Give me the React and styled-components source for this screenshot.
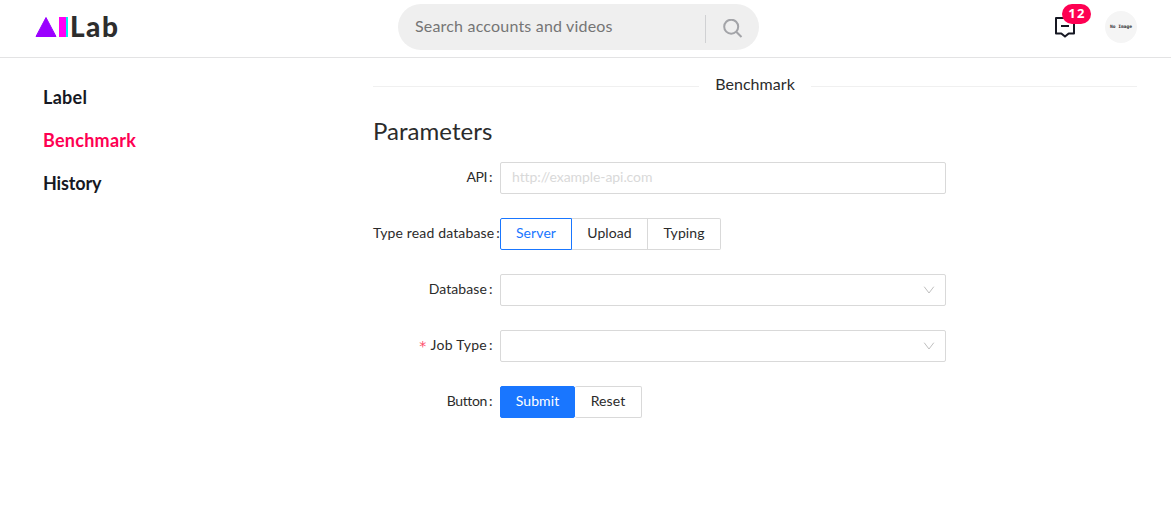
import React from 'react';
import styled, { createGlobalStyle } from 'styled-components';

const Global = createGlobalStyle`
  *, *::before, *::after { box-sizing: border-box; }
  body { margin: 0; background: #fff; color: #2b2b2b; font-family: Lato, Roboto, sans-serif; font-size: 14px; }
  button, input { font: inherit; letter-spacing: inherit; }
  h2 { margin: 0; }
`;

const Page = styled.div`
  height: 519px;
  overflow: hidden;
`;

const Header = styled.header`
  display: flex;
  align-items: flex-start;
  height: 58px;
  padding: 4px 34px 0 35px;
  border-bottom: 1px solid #e3e3e4;
`;

const Logo = styled.div`
  display: flex;
  align-items: center;
  width: 101px;
  height: 46px;
`;

const LogoMark = styled.svg`
  flex: none;
  display: block;
`;

const LogoText = styled.span`
  margin-left: 1px;
  padding-bottom: 2px;
  color: #2d2d2d;
  font: 900 28px/44px Lato, sans-serif;
  letter-spacing: 1.5px;
`;

const Search = styled.form`
  display: flex;
  align-items: center;
  width: 361px;
  height: 46px;
  margin-left: 262px;
  border-radius: 23px;
  background: #efefef;
`;

const SearchInput = styled.input`
  width: 307px;
  height: 46px;
  padding: 0 17px 3px;
  border: 0;
  background: transparent;
  font-size: 16px;
  letter-spacing: 0.19px;
  &::placeholder { color: #757575; opacity: 1; }
`;

const SearchButton = styled.button`
  display: grid;
  place-items: center;
  width: 54px;
  height: 28px;
  padding: 0;
  border: 0;
  border-left: 1px solid #d0d1d3;
  background: transparent;
  margin-top: 3px;
`;

const Actions = styled.div`
  display: flex;
  align-items: center;
  gap: 28px;
  height: 46px;
  margin-left: auto;
`;

const Inbox = styled.div`
  position: relative;
  width: 24px;
  height: 24px;
`;

const Badge = styled.span`
  position: absolute;
  top: -11px;
  left: 9px;
  width: 29px;
  height: 20px;
  border-radius: 10px;
  background: #fe0052;
  color: #fff;
  font: 700 13px/19px "Open Sans", sans-serif;
  letter-spacing: 1.2px;
  text-indent: 1px;
  text-align: center;
`;

const Avatar = styled.div`
  width: 32px;
  height: 32px;
  border-radius: 50%;
  background: #f5f5f5;
  color: #333;
  font: 700 4.6px/31px "DejaVu Sans Mono", monospace;
  text-align: center;
  white-space: nowrap;
`;

const Body = styled.div`
  display: flex;
`;

const Sidebar = styled.nav`
  display: flex;
  flex-direction: column;
  width: 373px;
  padding: 18px 0 0 43px;
`;

const NavItem = styled.a`
  color: ${(p) => (p.$active ? '#fe0052' : '#161823')};
  font-size: 18px;
  font-weight: 700;
  line-height: 43px;
  letter-spacing: ${(p) => p.$spacing || '0.25px'};
`;

const Main = styled.main`
  width: 764px;
  padding-top: 15px;
`;

const Divider = styled.div`
  display: flex;
  align-items: center;
  height: 25px;
  font-size: 16px;
  letter-spacing: 0.05px;
  &::before, &::after {
    content: '';
    flex: 1;
    height: 1px;
    margin-top: 1px;
    background: #f0f0f0;
  }
`;

const DividerText = styled.span`
  width: 112px;
  padding-bottom: 3px;
  line-height: 20px;
  text-align: center;
`;

const Title = styled.h2`
  height: 64px;
  padding-top: 15px;
  font-size: 24px;
  font-weight: 400;
  line-height: 36px;
  letter-spacing: 0.03px;
`;

const Row = styled.div`
  display: flex;
  height: 32px;
  margin-bottom: 24px;
`;

const Label = styled.label`
  display: flex;
  justify-content: flex-end;
  flex: none;
  width: 127px;
  padding-right: ${(p) => (p.$tight ? '0' : '7px')};
  line-height: 30px;
  white-space: nowrap;
  letter-spacing: ${(p) => p.$spacing || '0.1px'};
  &::after { content: ':'; width: 4px; margin-left: 2px; letter-spacing: 0; }
`;

const Required = styled.span`
  margin-right: 4px;
  color: #fe4c69;
  font: 14px/33px "DejaVu Sans", sans-serif;
`;

const Field = styled.input`
  width: 446px;
  height: 32px;
  padding: 0 11px 3px;
  border: 1px solid #d9d9d9;
  border-radius: 2px;
  background: #fff;
  letter-spacing: -0.07px;
  &::placeholder { color: #d9d9d9; opacity: 1; }
`;

const Select = styled.div`
  display: flex;
  align-items: center;
  justify-content: flex-end;
  width: 446px;
  height: 32px;
  padding-right: 10px;
  border: 1px solid #d9d9d9;
  border-radius: 2px;
`;

const Group = styled.div`
  display: flex;
`;

const Button = styled.button`
  width: ${(p) => p.$width}px;
  height: 32px;
  padding: 0 0 3px;
  border: 1px solid ${(p) => (p.$kind ? '#1976ff' : '#d9d9d9')};
  border-left-width: ${(p) => (p.$joined ? '0' : '1px')};
  border-radius: ${(p) => p.$radius || '0'};
  background: ${(p) => (p.$kind === 'primary' ? '#1976ff' : '#fff')};
  color: ${(p) => (p.$kind === 'primary' ? '#fff' : p.$kind ? '#1976ff' : '#2b2b2b')};
  letter-spacing: 0.1px;
`;

const Chevron = () => (
  <svg width="12" height="12" viewBox="0 0 12 12" fill="none" stroke="#bfbfbf">
    <path d="M1.2 2.7 6 9l4.8-6.3" />
  </svg>
);

export default function App() {
  return (
    <Page>
      <Global />
      <Header>
        <Logo>
          <LogoMark width="34" height="22" viewBox="0 0 34 22">
            <path d="M11 1.5 21 20.5H1Z" fill="#9b00ff" stroke="#9b00ff" strokeLinejoin="round" />
            <path d="M24 1h7v20h-7z" fill="#ff00f5" />
            <path d="M31 1h2v20h-2z" fill="#00f2ea" />
          </LogoMark>
          <LogoText>Lab</LogoText>
        </Logo>
        <Search>
          <SearchInput placeholder="Search accounts and videos" />
          <SearchButton type="button" aria-label="Search">
            <svg width="20" height="20" viewBox="0 0 20 20" fill="none" stroke="#a3a4a8" strokeWidth="2">
              <circle cx="8.2" cy="7.7" r="7" />
              <path d="m13.2 12.7 5.3 5.3" />
            </svg>
          </SearchButton>
        </Search>
        <Actions>
          <Inbox>
            <svg width="24" height="24" viewBox="0 0 24 24" fill="none" stroke="#161823" strokeWidth="2">
              <path d="M3 3h18v15.5h-5.3L12 21.6l-3.7-3.1H3Z" strokeLinejoin="round" />
              <path d="M8 11h8" />
            </svg>
            <Badge>12</Badge>
          </Inbox>
          <Avatar>No Image</Avatar>
        </Actions>
      </Header>
      <Body>
        <Sidebar>
          <NavItem $spacing="0.3px">Label</NavItem>
          <NavItem $active>Benchmark</NavItem>
          <NavItem $spacing="-0.15px">History</NavItem>
        </Sidebar>
        <Main>
          <Divider><DividerText>Benchmark</DividerText></Divider>
          <Title>Parameters</Title>
          <Row>
            <Label $spacing="-0.4px">API</Label>
            <Field placeholder="http://example-api.com" />
          </Row>
          <Row>
            <Label $tight $spacing="0.15px">Type read database</Label>
            <Group>
              <Button $width={72} $kind="outline" $radius="2px 0 0 2px">Server</Button>
              <Button $width={76} $joined>Upload</Button>
              <Button $width={73} $joined $radius="0 2px 2px 0">Typing</Button>
            </Group>
          </Row>
          <Row>
            <Label>Database</Label>
            <Select><Chevron /></Select>
          </Row>
          <Row>
            <Label $spacing="0.3px"><Required>*</Required>Job Type</Label>
            <Select><Chevron /></Select>
          </Row>
          <Row>
            <Label $spacing="-0.35px">Button</Label>
            <Group>
              <Button $width={75} $kind="primary" $radius="2px">Submit</Button>
              <Button $width={67} $joined $radius="2px">Reset</Button>
            </Group>
          </Row>
        </Main>
      </Body>
    </Page>
  );
}
